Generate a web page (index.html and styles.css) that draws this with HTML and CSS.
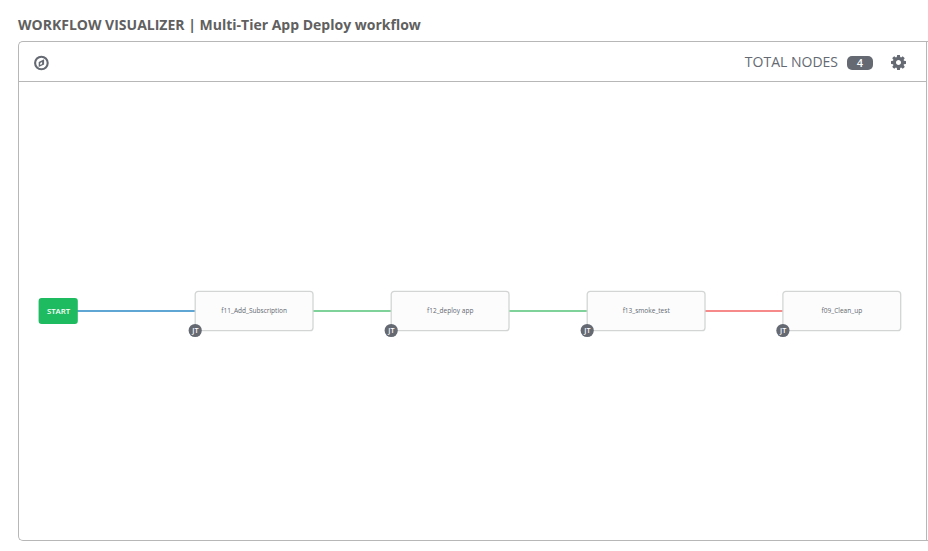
FILE: index.html
```html
<!DOCTYPE html>
<html lang="en">
<head>
<meta charset="utf-8">
<title>Workflow Visualizer</title>
<link rel="stylesheet" href="styles.css">
</head>
<body>
<main class="page">
  <h1 class="title">WORKFLOW VISUALIZER | Multi-Tier App Deploy workflow</h1>
  <section class="panel">
    <div class="panel-body">
      <header class="toolbar">
        <svg class="icon" viewBox="0 0 16 16" aria-hidden="true">
          <circle cx="8.400" cy="8" r="6.3" fill="none" stroke="currentColor" stroke-width="2.1"/>
          <path fill="currentColor" fill-rule="evenodd" d="M11.100 4.300v5.300L5.700 12V6.900zM9.100 7 7.200 7.900v2l1.900-.9z"/>
        </svg>
        <div class="summary">
          <span class="summary-label">TOTAL NODES</span>
          <span class="badge">4</span>
          <svg class="icon gear" viewBox="0 0 1536 1536" aria-hidden="true">
            <path fill="currentColor" d="M1024 768q0-106-75-181t-181-75-181 75-75 181 75 181 181 75 181-75 75-181zm512-109v222q0 12-8 23t-20 13l-185 28q-19 54-39 91 35 50 107 138 10 12 10 25t-9 23q-27 37-99 108t-94 71q-12 0-26-9l-138-108q-44 23-91 38-16 136-29 186-7 28-36 28H657q-14 0-24.500-8.500T621 1506l-28-184q-49-16-90-37l-141 107q-10 9-25 9-14 0-25-11-126-114-165-168-7-10-7-23 0-12 8-23 15-21 51-66.500t54-70.500q-27-50-41-99L29 913q-13-2-21-12.500T0 877V655q0-12 8-23t19-13l186-28q14-46 39-92-40-57-107-138-10-12-10-24 0-10 9-23 26-36 98.500-107.500T337 135q13 0 26 10l138 107q44-23 91-38 16-136 29-186 7-28 36-28h222q14 0 24.500 8.500T915 30l28 184q49 16 90 37l142-107q9-9 24-9 13 0 25 10 129 119 165 170 7 8 7 22 0 12-8 23-15 21-51 66.500t-54 70.500q26 50 41 98l183 28q13 2 21 12.500t8 23.500z"/>
          </svg>
        </div>
      </header>
      <svg class="chart" viewBox="19 82 907 458" role="img" aria-label="Workflow nodes">
        <g class="links">
          <path class="always" d="M77 311H196"/>
          <path class="success" d="M313 311H392"/>
          <path class="success" d="M509 311H588"/>
          <path class="failure" d="M705 311H784"/>
        </g>
        <rect class="start" x="38.600" y="298" width="39.200" height="26" rx="3"/>
        <text class="start-label" x="58.500" y="314">START</text>
        <g class="node" transform="translate(195 291)">
          <rect x=".2" y=".3" width="117.800" height="39.400" rx="3"/>
          <text x="59.200" y="22">f11_Add_Subscription</text>
          <circle cx=".2" cy="39.500" r="6.600"/><text class="type" x=".4" y="42">JT</text>
        </g>
        <g class="node" transform="translate(391 291)">
          <rect x=".2" y=".3" width="117.800" height="39.400" rx="3"/>
          <text x="59.200" y="22">f12_deploy app</text>
          <circle cx=".2" cy="39.500" r="6.600"/><text class="type" x=".4" y="42">JT</text>
        </g>
        <g class="node" transform="translate(587 291)">
          <rect x=".2" y=".3" width="117.800" height="39.400" rx="3"/>
          <text x="59.200" y="22">f13_smoke_test</text>
          <circle cx=".2" cy="39.500" r="6.600"/><text class="type" x=".4" y="42">JT</text>
        </g>
        <g class="node" transform="translate(782.700 291)">
          <rect x=".2" y=".3" width="117.800" height="39.400" rx="3"/>
          <text x="59.200" y="22">f09_Clean_up</text>
          <circle cx=".2" cy="39.500" r="6.600"/><text class="type" x=".4" y="42">JT</text>
        </g>
      </svg>
    </div>
  </section>
</main>
</body>
</html>
```
FILE: styles.css
```css
* { box-sizing: border-box; }
body {
  margin: 0;
  background: #fff;
  color: #646972;
  font-family: "Open Sans", sans-serif;
  overflow: hidden;
}
.page { padding: 15px 0 0 18px; }
.title {
  margin: 0 0 6px;
  font-size: 14px;
  line-height: 20px;
  font-weight: 700;
  color: #606060;
  white-space: nowrap;
}
.panel {
  height: 500px;
  border: 1px solid #b7b7b7;
  border-right: 0;
  border-radius: 5px 0 0 5px;
}
.panel-body {
  width: 908px;
  height: 498px;
  border-right: 1px solid #b7b7b7;
}
.toolbar {
  display: flex;
  align-items: center;
  justify-content: space-between;
  height: 40px;
  padding: 2px 20px 0 14px;
  border-bottom: 1px solid #b7b7b7;
}
.icon { display: block; width: 16px; height: 16px; color: #646972; }
.summary { display: flex; align-items: center; }
.summary-label { font-size: 14px; line-height: 20px; margin-top: -2px; }
.badge {
  width: 26px;
  height: 14px;
  margin: 0 18px 0 9px;
  border-radius: 5px;
  background: #646972;
  color: #fff;
  font-size: 11px;
  font-weight: 600;
  line-height: 14px;
  text-align: center;
}
.gear { width: 15px; height: 15px; }
.chart { display: block; width: 907px; height: 458px; }
.chart text { text-anchor: middle; font-size: 6.550px; }
.links path { fill: none; stroke-width: 2; }
.always { stroke: #5fa6d5; }
.success { stroke: #7fd39a; }
.failure { stroke: #f68a8a; }
.start { fill: #1fbb61; }
.chart .start-label { fill: #fff; font-size: 7.800px; font-weight: 600; }
.node rect { fill: #fcfcfc; stroke: #d3d5d5; stroke-width: 1.300; }
.node text { fill: #646972; }
.node circle { fill: #646972; }
.chart .node .type { fill: #fff; font-size: 7.200px; font-weight: 600; }
```
